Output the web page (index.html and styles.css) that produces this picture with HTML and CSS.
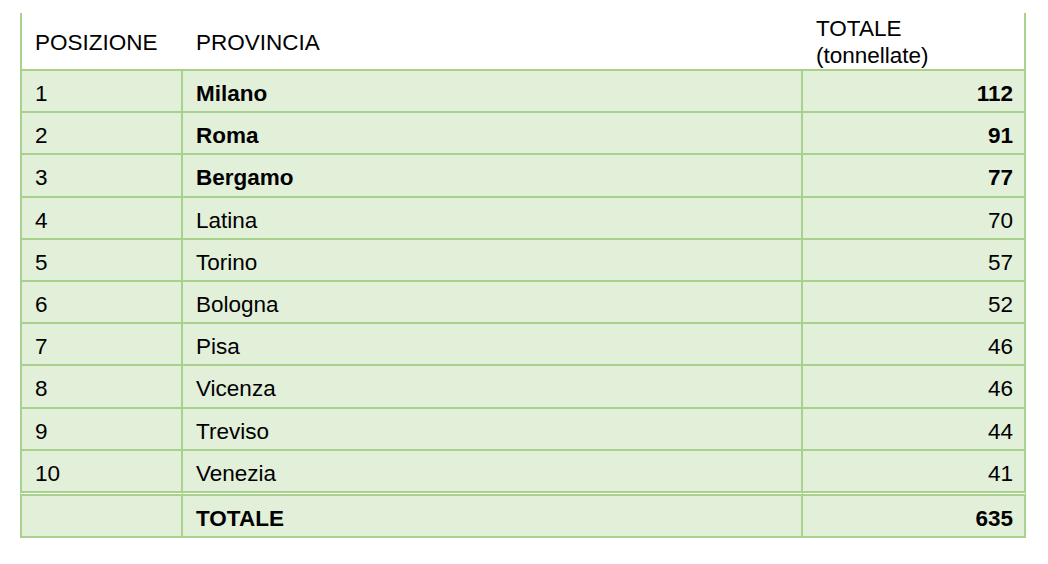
FILE: index.html
```html
<!DOCTYPE html>
<html lang="it">
<head>
<meta charset="utf-8">
<title>Classifica province</title>
<link rel="stylesheet" href="styles.css">
</head>
<body>
<table class="ranking">
  <colgroup>
    <col class="c-pos">
    <col class="c-prov">
    <col class="c-tot">
  </colgroup>
  <thead>
    <tr>
      <th class="first">POSIZIONE</th>
      <th>PROVINCIA</th>
      <th class="last">TOTALE<br>(tonnellate)</th>
    </tr>
  </thead>
  <tbody>
    <tr class="strong"><td>1</td><td class="name">Milano</td><td class="num">112</td></tr>
    <tr class="strong"><td>2</td><td class="name">Roma</td><td class="num">91</td></tr>
    <tr class="strong"><td>3</td><td class="name">Bergamo</td><td class="num">77</td></tr>
    <tr><td>4</td><td>Latina</td><td class="num">70</td></tr>
    <tr><td>5</td><td>Torino</td><td class="num">57</td></tr>
    <tr><td>6</td><td>Bologna</td><td class="num">52</td></tr>
    <tr><td>7</td><td>Pisa</td><td class="num">46</td></tr>
    <tr><td>8</td><td>Vicenza</td><td class="num">46</td></tr>
    <tr><td>9</td><td>Treviso</td><td class="num">44</td></tr>
    <tr class="tenth"><td>10</td><td>Venezia</td><td class="num">41</td></tr>
    <tr class="total"><td></td><td class="name">TOTALE</td><td class="num">635</td></tr>
  </tbody>
</table>
</body>
</html>
```

FILE: styles.css
```css
html, body {
  margin: 0;
  padding: 0;
  background: #ffffff;
}

body {
  font-family: "Liberation Sans", Arial, Helvetica, sans-serif;
  font-size: 22.5px;
  color: #000000;
}

.ranking {
  margin: 13px 0 0 20px;
  width: 1006px;
  table-layout: fixed;
  border-collapse: separate;
  border-spacing: 0;
  background: #ffffff;
}

.c-pos { width: 163px; }
.c-prov { width: 620px; }
.c-tot { width: 223px; }

.ranking th {
  font-weight: normal;
  text-align: left;
  vertical-align: middle;
  height: 58px;
  line-height: 27px;
  padding: 2px 12px 0 13px;
  border-bottom: 2px solid #a9d18e;
  box-sizing: border-box;
}

.ranking th.first {
  border-left: 2px solid #a9d18e;
  padding-left: 13px;
}

.ranking th.last {
  border-right: 2px solid #a9d18e;
}

.ranking td {
  background: #e2efd9;
  line-height: 26px;
  padding: 6px 11px 0 13px;
  vertical-align: middle;
  border-right: 2px solid #a9d18e;
  border-bottom: 2px solid #a9d18e;
  box-sizing: border-box;
}

.ranking td:first-child {
  border-left: 2px solid #a9d18e;
  padding-left: 13px;
}

.ranking tbody tr td {
  height: 42.2px;
}

.ranking td.num {
  text-align: right;
}

.strong td.name,
.strong td.num,
.total td.name,
.total td.num {
  font-weight: bold;
}

.ranking tbody tr.tenth td {
  border-bottom: none;
  height: 40.2px;
}

.ranking tbody tr.total td {
  border-top: 5px double #a9d18e;
  background-clip: padding-box;
  height: 47px;
}
```
